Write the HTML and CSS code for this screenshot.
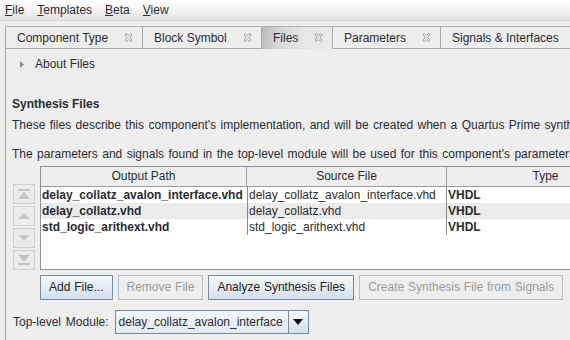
FILE: index.html
```html
<!DOCTYPE html>
<html>
<head>
<meta charset="utf-8">
<link rel="stylesheet" href="styles.css">
</head>
<body>
<div class="menubar">
  <span class="menu"><u>F</u>ile</span>
  <span class="menu"><u>T</u>emplates</span>
  <span class="menu"><u>B</u>eta</span>
  <span class="menu"><u>V</u>iew</span>
</div>
<div class="menusep"></div>
<div class="pane">
  <div class="tabs">
    <div class="tab t1"><span>Component Type</span><svg class="x" viewBox="0 0 9 9"><path d="M1 1.5 L2.5 0.5 L4.5 2.5 L6.5 0.5 L8 1.5 L6 4.5 L8 7.5 L6.5 8.5 L4.5 6.5 L2.5 8.5 L1 7.5 L3 4.5 Z"/></svg></div>
    <div class="tab t2"><span>Block Symbol</span><svg class="x" viewBox="0 0 9 9"><path d="M1 1.5 L2.5 0.5 L4.5 2.5 L6.5 0.5 L8 1.5 L6 4.5 L8 7.5 L6.5 8.5 L4.5 6.5 L2.5 8.5 L1 7.5 L3 4.5 Z"/></svg></div>
    <div class="tab t3 sel"><span>Files</span><svg class="x" viewBox="0 0 9 9"><path d="M1 1.5 L2.5 0.5 L4.5 2.5 L6.5 0.5 L8 1.5 L6 4.5 L8 7.5 L6.5 8.5 L4.5 6.5 L2.5 8.5 L1 7.5 L3 4.5 Z"/></svg></div>
    <div class="tab t4"><span>Parameters</span><svg class="x" viewBox="0 0 9 9"><path d="M1 1.5 L2.5 0.5 L4.5 2.5 L6.5 0.5 L8 1.5 L6 4.5 L8 7.5 L6.5 8.5 L4.5 6.5 L2.5 8.5 L1 7.5 L3 4.5 Z"/></svg></div>
    <div class="tab t5"><span>Signals &amp; Interfaces</span></div>
  </div>
  <div class="content">
    <div class="about"><svg class="tri" viewBox="0 0 4 7"><path d="M0 0 L4 3.5 L0 7 Z"/></svg><span>About Files</span></div>
    <div class="h">Synthesis Files</div>
    <div class="p1">These files describe this component's implementation, and will be created when a Quartus Prime synthesis is run.</div>
    <div class="p2">The parameters and signals found in the top-level module will be used for this component's parameters and signals.</div>
    <div class="tablerow">
      <div class="navbtns">
        <div class="nb"><svg viewBox="0 0 14 12"><rect x="1" y="1" width="12" height="2"/><path d="M1 11 L7 4 L13 11 Z"/></svg></div>
        <div class="nb"><svg viewBox="0 0 14 12"><path d="M1 9 L7 3 L13 9 Z"/></svg></div>
        <div class="nb"><svg viewBox="0 0 14 12"><path d="M1 3 L7 9 L13 3 Z"/></svg></div>
        <div class="nb"><svg viewBox="0 0 14 12"><path d="M1 1 L7 8 L13 1 Z"/><rect x="1" y="9" width="12" height="2"/></svg></div>
      </div>
      <div class="table">
        <div class="thead">
          <div class="c1">Output Path</div>
          <div class="c2">Source File</div>
          <div class="c3">Type</div>
        </div>
        <div class="tr">
          <div class="c1 b">delay_collatz_avalon_interface.vhd</div>
          <div class="c2">delay_collatz_avalon_interface.vhd</div>
          <div class="c3 b">VHDL</div>
        </div>
        <div class="tr alt">
          <div class="c1 b">delay_collatz.vhd</div>
          <div class="c2">delay_collatz.vhd</div>
          <div class="c3 b">VHDL</div>
        </div>
        <div class="tr">
          <div class="c1 b">std_logic_arithext.vhd</div>
          <div class="c2">std_logic_arithext.vhd</div>
          <div class="c3 b">VHDL</div>
        </div>
      </div>
    </div>
    <div class="buttons">
      <div class="btn">Add File...</div>
      <div class="btn dis">Remove File</div>
      <div class="btn">Analyze Synthesis Files</div>
      <div class="btn dis">Create Synthesis File from Signals</div>
    </div>
    <div class="toprow">
      <span class="lbl">Top-level Module:</span>
      <div class="combo">
        <div class="cval">delay_collatz_avalon_interface</div>
        <div class="carrow"><svg viewBox="0 0 10 6"><path d="M0 0 L10 0 L5 6 Z"/></svg></div>
      </div>
    </div>
  </div>
</div>
</body>
</html>
```
FILE: styles.css
```css
html, body {
  margin: 0;
  padding: 0;
  overflow: hidden;
  width: 570px;
  height: 340px;
}
body {
  background: #eeeeee;
  font-family: "Liberation Sans", Arial, sans-serif;
  font-size: 12px;
  color: #2b2b33;
}
.menubar {
  height: 20px;
  display: flex;
  align-items: center;
  gap: 13px;
  padding-left: 5px;
  background: linear-gradient(#ffffff, #f4f4f4 50%, #e3e3e3);
}
.menu u { text-decoration: underline; text-underline-offset: 1px; }
.menusep {
  height: 5px;
  border-top: 1px solid #d8d8d8;
  background: #eeeeee;
}
.pane {
  margin-left: 5px;
  border-left: 1px solid #a6a6a6;
  height: 320px;
}
.tabs {
  display: flex;
  height: 22px;
  border-top: 1px solid #b0b0b0;
  width: 700px;
}
.tab {
  box-sizing: border-box;
  display: flex;
  align-items: center;
  justify-content: space-between;
  padding-left: 11px;
  padding-right: 9px;
  border-right: 1px solid #a8a8a8;
  border-bottom: 1px solid #a8a8a8;
  flex: none;
  height: 22px;
}
.tab span { line-height: 20px; padding-top: 1px; }
.tab.sel {
  border-bottom-color: transparent;
  background: linear-gradient(100deg, #b9b9b9 0%, #d6d6d6 25%, #e6e6e6 60%, #eaeaea 100%);
}
.t1 { width: 137px; }
.t2 { width: 119px; }
.t3 { width: 71px; }
.t4 { width: 108px; }
.t5 { width: 200px; }
.x {
  width: 9px;
  height: 9px;
  fill: none;
  stroke: #8c8c8c;
  stroke-width: 0.8;
}
.content {
  padding-left: 6px;
}
.about {
  margin-top: 6px;
  height: 18px;
  display: flex;
  align-items: center;
}
.tri {
  width: 4px;
  height: 7px;
  fill: #8a8a8a;
  margin-left: 8px;
  margin-right: 11px;
}
.h {
  font-weight: bold;
  margin-top: 23px;
  line-height: 16px;
}
.p1 {
  margin-top: 5px;
  line-height: 16px;
  white-space: nowrap;
  word-spacing: 1.1px;
}
.p2 {
  margin-top: 13px;
  line-height: 16px;
  white-space: nowrap;
  word-spacing: 1.1px;
}
.tablerow {
  display: flex;
  margin-top: 4px;
  height: 104px;
}
.navbtns {
  width: 22px;
  margin-left: 1px;
  margin-right: 5px;
  display: flex;
  flex-direction: column;
  gap: 2px;
  padding-top: 18px;
}
.nb {
  box-sizing: border-box;
  width: 22px;
  height: 20px;
  border: 1px solid #cfcfcf;
  background: #ebebeb;
  display: flex;
  align-items: center;
  justify-content: center;
}
.nb svg {
  width: 14px;
  height: 12px;
  fill: #c4c4c4;
}
.table {
  box-sizing: border-box;
  width: 620px;
  height: 104px;
  border: 1px solid #8a939c;
  background: #ffffff;
  flex: none;
}
.thead {
  display: flex;
  height: 19px;
  background: #eeeeee;
  border-bottom: 1px solid #9a9a9a;
}
.thead > div {
  text-align: center;
  line-height: 19px;
  border-right: 1px solid #9a9a9a;
  box-sizing: border-box;
}
.c1 { width: 206px; flex: none; }
.c2 { width: 200px; flex: none; }
.c3 { width: 198px; flex: none; }
.tr {
  display: flex;
  height: 16px;
  background: #ffffff;
}
.tr.alt { background: #ebebeb; }
.tr > div {
  box-sizing: border-box;
  line-height: 16px;
  padding-left: 1px;
  white-space: nowrap;
  overflow: hidden;
}
.tr > .c2 { border-left: 1px solid #8a8a8a; border-right: 1px solid #8a8a8a; }
.b { font-weight: bold; }
.buttons {
  display: flex;
  gap: 5px;
  margin-top: 5px;
  margin-left: 28px;
}
.btn {
  box-sizing: border-box;
  height: 25px;
  line-height: 23px;
  padding: 0 8px;
  border: 1px solid #7b8a99;
  background: linear-gradient(#f6f9fc, #e4ecf4 50%, #d2dfeb);
  white-space: nowrap;
  color: #222;
  word-spacing: 0.5px;
}
.btn.dis {
  border-color: #b9bec4;
  background: #eeeeee;
  color: #9c9c9c;
}
.toprow {
  display: flex;
  align-items: center;
  margin-top: 10px;
  margin-left: 1px;
}
.lbl { margin-right: 6px; word-spacing: 1.5px; }
.combo {
  display: flex;
  height: 24px;
}
.cval {
  box-sizing: border-box;
  width: 174px;
  height: 24px;
  line-height: 22px;
  padding-left: 3px;
  border: 1px solid #7b8a99;
  background: linear-gradient(#f2f6fa, #e2eaf2);
  white-space: nowrap;
}
.carrow {
  box-sizing: border-box;
  width: 20px;
  height: 24px;
  border: 1px solid #7b8a99;
  border-left: none;
  background: linear-gradient(#f6f9fc, #d2dfeb);
  display: flex;
  align-items: center;
  justify-content: center;
}
.carrow svg { width: 10px; height: 6px; fill: #111; }
```
